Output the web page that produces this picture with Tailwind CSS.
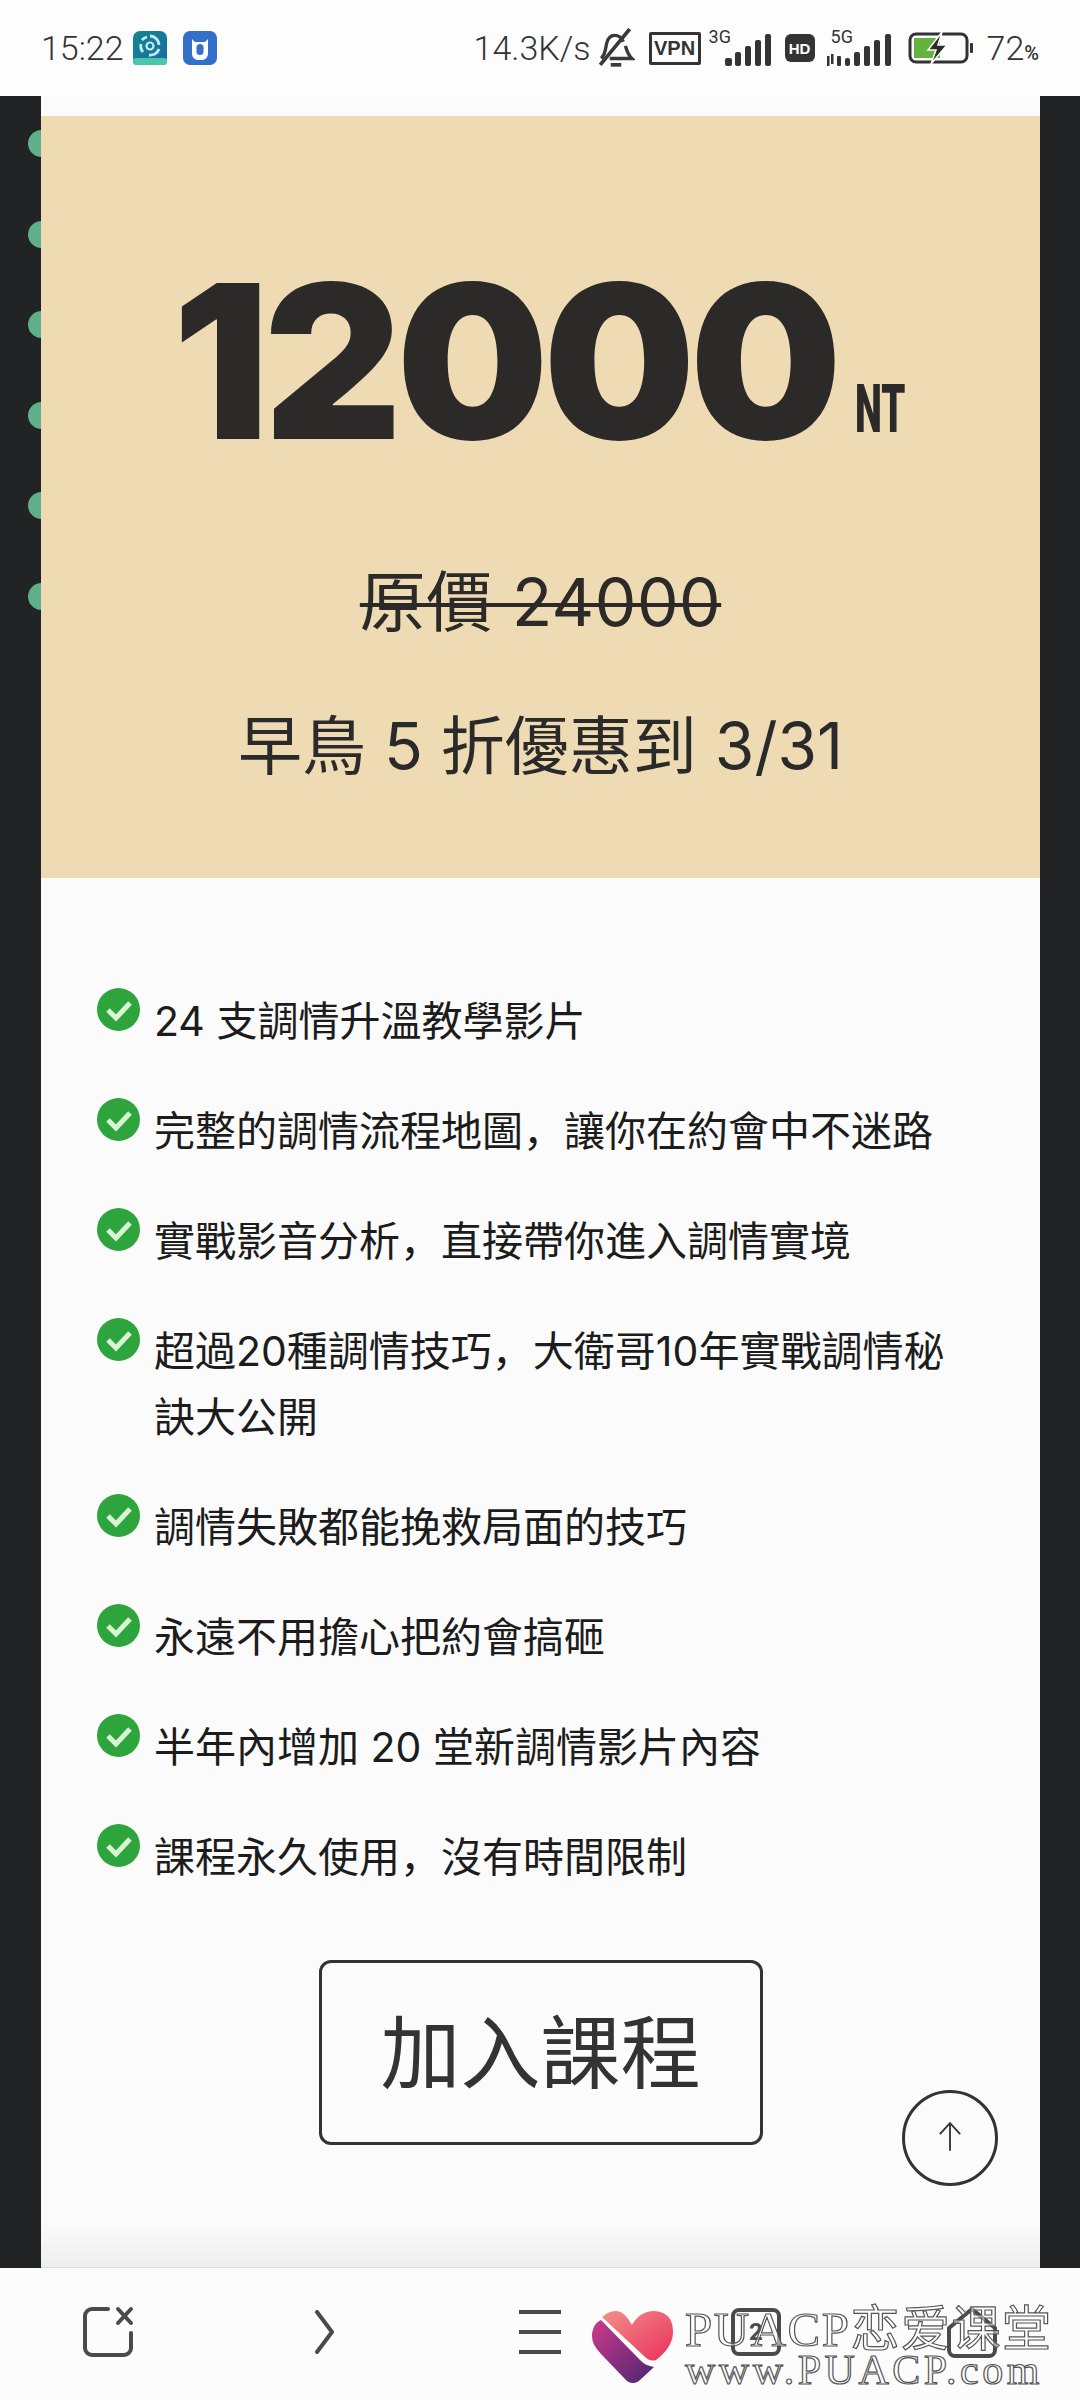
<!DOCTYPE html>
<html lang="en">
<head>
  <meta charset="UTF-8">
  <title>加入課程</title>
  <script src="https://cdn.jsdelivr.net/npm/@tailwindcss/browser@4"></script>
</head>
<body class="bg-[#fcfcfc] font-['Inter','Noto_Sans_CJK_SC',sans-serif] text-[#222]">
<div class="relative w-[1080px] h-[2400px] flex flex-col overflow-hidden">

  <!-- status bar -->
  <div class="h-[96px] shrink-0 bg-[#fdfdfd] flex items-center pl-[41px] pr-[41px] text-[#333] font-['Roboto',sans-serif]">
    <span class="text-[34px] font-light leading-none w-[92px]">15:22</span>
    <svg class="w-[34px] h-[34px]" viewBox="0 0 34 34">
      <defs><linearGradient id="a1" x1="0" y1="0" x2="1" y2="1"><stop offset="0" stop-color="#14868f"/><stop offset="1" stop-color="#1c6aa6"/></linearGradient></defs>
      <rect width="34" height="34" rx="7" fill="url(#a1)"/>
      <path d="M17 5a9 9 0 0 1 9 9M26 18a9 9 0 0 1-10 6M10 21a9 9 0 0 1-2-8M9 9a9 9 0 0 1 5-3" fill="none" stroke="#bdf0ea" stroke-width="2.800"/>
      <circle cx="17" cy="15" r="3.500" fill="none" stroke="#bdf0ea" stroke-width="2.200"/>
      <rect y="27" width="34" height="7" rx="3" fill="#4cc5ad"/>
    </svg>
    <svg class="w-[34px] h-[34px] ml-[16px]" viewBox="0 0 34 34">
      <rect width="34" height="34" rx="7" fill="#3470c9"/>
      <path d="M9 8l3 3h10l3-3v15a6 6 0 0 1-6 6h-4a6 6 0 0 1-6-6z" fill="#fff"/>
      <rect x="13.500" y="13" width="7" height="11" rx="3.500" fill="#3470c9"/>
    </svg>
    <span class="ml-auto text-[34px] font-light leading-none">14.3K/s</span>
    <svg class="w-[38px] h-[40px] ml-[6px]" viewBox="0 0 36 38" fill="none" stroke="#3a3a3a" stroke-width="3.200">
      <path d="M4 29c4-4 4-9 5-14 1-5 4-8 8-8s6 2 8 6M27 17c1 4 2 8 6 12H12"/>
      <path d="M3 35L31 1" stroke-width="3.500"/>
      <path d="M13 35h10" stroke-width="3.500"/>
    </svg>
    <div class="ml-[14px] w-[52px] h-[33px] border-[3px] border-[#333] rounded-[2px] flex items-center justify-center text-[20px] font-bold leading-none text-[#333] font-['Liberation_Sans',sans-serif]">VPN</div>
    <div class="relative ml-[8px] w-[64px] h-[40px]">
      <span class="absolute left-0 top-0 text-[18px] leading-none">3G</span>
      <svg class="absolute left-[16px] top-[6px] w-[48px] h-[32px]" viewBox="0 0 48 32" fill="#333">
        <rect x="0" y="24" width="7" height="8" rx="2"/><rect x="10" y="18" width="6" height="14" rx="2"/><rect x="20" y="12" width="6" height="20" rx="2"/><rect x="30" y="6" width="6" height="26" rx="2"/><rect x="40" y="0" width="6" height="32" rx="2"/>
      </svg>
    </div>
    <div class="ml-[12px] w-[30px] h-[28px] rounded-[6px] bg-[#333] text-white flex items-center justify-center text-[15px] font-bold leading-none font-['Liberation_Sans',sans-serif]">HD</div>
    <div class="relative ml-[12px] w-[67px] h-[40px]">
      <span class="absolute left-[4px] top-0 text-[18px] leading-none">5G</span>
      <svg class="absolute left-0 top-[6px] w-[67px] h-[32px]" viewBox="0 0 67 32" fill="#333">
        <rect x="0" y="22" width="2.500" height="10"/><rect x="4" y="20" width="2.500" height="10"/><rect x="10" y="22" width="4" height="10" rx="1"/><rect x="18" y="24" width="5" height="8" rx="2"/><rect x="27" y="18" width="6" height="14" rx="2"/><rect x="37" y="12" width="6" height="20" rx="2"/><rect x="47" y="6" width="6" height="26" rx="2"/><rect x="58" y="0" width="6" height="32" rx="2"/>
      </svg>
    </div>
    <svg class="ml-[14px] w-[66px] h-[32px]" viewBox="0 0 66 32">
      <rect x="2" y="2" width="57" height="28" rx="6" fill="none" stroke="#333" stroke-width="3"/>
      <rect x="6" y="6" width="26" height="20" fill="#63b33d"/>
      <rect x="62" y="11" width="3" height="10" rx="1" fill="#333"/>
      <path d="M34 0L20 18h8l-5 14 16-19h-9z" fill="#2c2c2c" stroke="#fdfdfd" stroke-width="1.500"/>
    </svg>
    <span class="ml-[13px] text-[34px] font-light leading-none">72<span class="text-[20px] font-medium">%</span></span>
  </div>

  <!-- page area -->
  <div class="relative flex-1 bg-[#222325] pr-[40px] pl-[41px] flex">
    <div class="absolute left-[28px] top-[34px] flex flex-col gap-[63.500px]">
      <span class="w-[27px] h-[27px] rounded-full bg-[#5fb08a]"></span>
      <span class="w-[27px] h-[27px] rounded-full bg-[#5fb08a]"></span>
      <span class="w-[27px] h-[27px] rounded-full bg-[#5fb08a]"></span>
      <span class="w-[27px] h-[27px] rounded-full bg-[#5fb08a]"></span>
      <span class="w-[27px] h-[27px] rounded-full bg-[#5fb08a]"></span>
      <span class="w-[27px] h-[27px] rounded-full bg-[#5fb08a]"></span>
    </div>

    <div class="relative w-full flex flex-col bg-[#fbfbfb] pt-[20px]">
      <!-- price block -->
      <section class="h-[762px] bg-[#eedbb3] flex flex-col items-center">
        <div class="flex items-end mt-[91px] h-[322px] pb-[60px] text-[#2c2a28] -ml-[8px]">
          <span class="text-[214px] font-black leading-none tracking-[-5.500px]">12000</span>
          <span class="ml-[18px] mb-[26px] text-[66px] font-black leading-none inline-block scale-x-[0.58] origin-left w-[46px] font-['Roboto',sans-serif]">NT</span>
        </div>
        <p class="mt-[33px] text-[66px] leading-[80px] text-[#2c2a28] line-through decoration-[4px] tracking-[0.5px]">原價 24000</p>
        <p class="mt-[64px] text-[64px] leading-[80px] text-[#2a2a2a]">早鳥 5 折優惠到 3/31</p>
      </section>

      <!-- feature list -->
      <ul class="mt-[110px] pl-[56px] pr-[80px] flex flex-col gap-[44px] text-[41px] leading-[66px] text-[#1c1c1c]">
        <li class="flex gap-[14px]"><svg class="w-[43px] h-[43px] shrink-0" viewBox="0 0 43 43"><circle cx="21.500" cy="21.500" r="21.500" fill="#2ea43c"/><path d="M11 22l8 8 14-15" fill="none" stroke="#d9f5d6" stroke-width="5"/></svg><span>24 支調情升溫教學影片</span></li>
        <li class="flex gap-[14px]"><svg class="w-[43px] h-[43px] shrink-0" viewBox="0 0 43 43"><circle cx="21.500" cy="21.500" r="21.500" fill="#2ea43c"/><path d="M11 22l8 8 14-15" fill="none" stroke="#d9f5d6" stroke-width="5"/></svg><span>完整的調情流程地圖，讓你在約會中不迷路</span></li>
        <li class="flex gap-[14px]"><svg class="w-[43px] h-[43px] shrink-0" viewBox="0 0 43 43"><circle cx="21.500" cy="21.500" r="21.500" fill="#2ea43c"/><path d="M11 22l8 8 14-15" fill="none" stroke="#d9f5d6" stroke-width="5"/></svg><span>實戰影音分析，直接帶你進入調情實境</span></li>
        <li class="flex gap-[14px]"><svg class="w-[43px] h-[43px] shrink-0" viewBox="0 0 43 43"><circle cx="21.500" cy="21.500" r="21.500" fill="#2ea43c"/><path d="M11 22l8 8 14-15" fill="none" stroke="#d9f5d6" stroke-width="5"/></svg><span>超過20種調情技巧，大衛哥10年實戰調情秘訣大公開</span></li>
        <li class="flex gap-[14px]"><svg class="w-[43px] h-[43px] shrink-0" viewBox="0 0 43 43"><circle cx="21.500" cy="21.500" r="21.500" fill="#2ea43c"/><path d="M11 22l8 8 14-15" fill="none" stroke="#d9f5d6" stroke-width="5"/></svg><span>調情失敗都能挽救局面的技巧</span></li>
        <li class="flex gap-[14px]"><svg class="w-[43px] h-[43px] shrink-0" viewBox="0 0 43 43"><circle cx="21.500" cy="21.500" r="21.500" fill="#2ea43c"/><path d="M11 22l8 8 14-15" fill="none" stroke="#d9f5d6" stroke-width="5"/></svg><span>永遠不用擔心把約會搞砸</span></li>
        <li class="flex gap-[14px]"><svg class="w-[43px] h-[43px] shrink-0" viewBox="0 0 43 43"><circle cx="21.500" cy="21.500" r="21.500" fill="#2ea43c"/><path d="M11 22l8 8 14-15" fill="none" stroke="#d9f5d6" stroke-width="5"/></svg><span>半年內增加 20 堂新調情影片內容</span></li>
        <li class="flex gap-[14px]"><svg class="w-[43px] h-[43px] shrink-0" viewBox="0 0 43 43"><circle cx="21.500" cy="21.500" r="21.500" fill="#2ea43c"/><path d="M11 22l8 8 14-15" fill="none" stroke="#d9f5d6" stroke-width="5"/></svg><span>課程永久使用，沒有時間限制</span></li>
      </ul>

      <a class="mx-auto mt-[70px] w-[444px] h-[185px] border-[3px] border-[#333] rounded-[12px] flex items-center justify-center text-[80px] text-[#333] leading-none">加入課程</a>

      <div class="mt-auto h-[46px] bg-gradient-to-b from-[#fbfbfb] to-[#eeeeee] border-b border-[#dcdcdc]"></div>

      <!-- back to top -->
      <div class="absolute left-[861px] top-[1994px] w-[96px] h-[96px] rounded-full border-[3px] border-[#333] bg-[#fbfbfb] flex items-center justify-center">
        <svg class="w-[24px] h-[30px] -mt-[4px]" viewBox="0 0 26 32" fill="none" stroke="#333" stroke-width="2"><path d="M13 32V2M2 14L13 2l11 12"/></svg>
      </div>
    </div>
  </div>

  <!-- bottom nav -->
  <nav class="h-[132px] shrink-0 bg-[#fcfcfc] grid grid-cols-5 items-center justify-items-center pb-[4px]">
    <svg class="w-[52px] h-[52px]" viewBox="0 0 52 52" fill="none" stroke="#4a4a4a" stroke-width="4" stroke-linecap="round">
      <path d="M26 3H10a7 7 0 0 0-7 7v32a7 7 0 0 0 7 7h32a7 7 0 0 0 7-7V27"/>
      <path d="M36 3l13 14M49 3L36 17"/>
    </svg>
    <svg class="w-[20px] h-[44px]" viewBox="0 0 20 44" fill="none" stroke="#4a4a4a" stroke-width="4" stroke-linecap="round" stroke-linejoin="round"><path d="M3 2l15 20L3 42"/></svg>
    <svg class="w-[44px] h-[46px]" viewBox="0 0 44 46" fill="none" stroke="#4a4a4a" stroke-width="4"><path d="M1 3h42M1 23h42M1 43h42"/></svg>
    <div class="w-[50px] h-[48px] border-[4px] border-[#4a4a4a] rounded-[8px] flex items-center justify-center text-[24px] font-bold leading-none text-[#4a4a4a] font-['Roboto',sans-serif]">2</div>
    <svg class="w-[52px] h-[52px]" viewBox="0 0 52 52" fill="none" stroke="#4a4a4a" stroke-width="4" stroke-linejoin="round"><path d="M3 22L26 3l23 19v22a6 6 0 0 1-6 6H9a6 6 0 0 1-6-6z"/></svg>
  </nav>

  <!-- watermark -->
  <div class="absolute left-[592px] top-[2304px] flex items-center gap-[12px]">
    <svg class="w-[81px] h-[74px] mt-[6px]" viewBox="0 0 81 74">
      <defs>
        <linearGradient id="h1" x1="0" y1="0" x2="1" y2="1"><stop offset="0" stop-color="#f2908a"/><stop offset="1" stop-color="#ea2f5c"/></linearGradient>
        <linearGradient id="h2" x1="0" y1="0" x2="1" y2="1"><stop offset="0" stop-color="#cf3a8c"/><stop offset="1" stop-color="#4a2570"/></linearGradient>
      </defs>
      <path d="M10 7Q18 0 25 1Q33 2 40 15Q48 1 62 1Q81 2 81 22Q81 37 64 50Q58 52 52 46Z" fill="url(#h1)"/>
      <path d="M9 10C4 12 0 18 0 26C0 34 5 39 9 44L33 69C37 74 44 74 48 70L62 57C56 56 52 54 48 50Z" fill="url(#h2)"/>
    </svg>
    <div class="flex flex-col text-white/50 font-['Liberation_Serif','Noto_Sans_CJK_SC',serif] [-webkit-text-stroke:1.2px_#555]">
      <span class="text-[49px] leading-[52px] tracking-[1.500px] whitespace-nowrap">PUACP恋爱课堂</span>
      <span class="text-[42px] leading-[28px] tracking-[3.500px] whitespace-nowrap">www.PUACP.com</span>
    </div>
  </div>
</div>
</body>
</html>
